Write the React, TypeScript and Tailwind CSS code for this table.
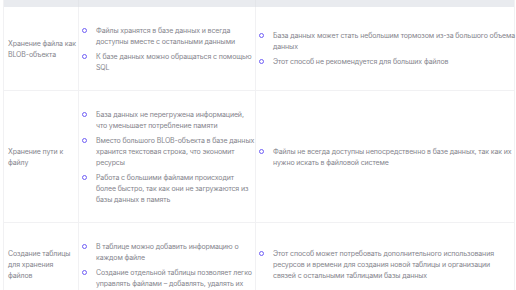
type Row = {
  name: string[];
  pros: string[][];
  cons: string[][];
  h: string;
};

const ROWS: Row[] = [
  {
    name: ['Хранение файла как', 'BLOB-объекта'],
    pros: [
      ['Файлы хранятся в базе данных и всегда', 'доступны вместе с остальными данными'],
      ['К базе данных можно обращаться с помощью', 'SQL'],
    ],
    cons: [
      ['База данных может стать небольшим тормозом из-за большого объема', 'данных'],
      ['Этот способ не рекомендуется для больших файлов'],
    ],
    h: 'h-[84px]',
  },
  {
    name: ['Хранение пути к', 'файлу'],
    pros: [
      ['База данных не перегружена информацией,', 'что уменьшает потребление памяти'],
      ['Вместо большого BLOB-объекта в базе данных', 'хранится текстовая строка, что экономит', 'ресурсы'],
      ['Работа с большими файлами происходит', 'более быстро, так как они не загружаются из', 'базы данных в память'],
    ],
    cons: [
      ['Файлы не всегда доступны непосредственно в базе данных, так как их', 'нужно искать в файловой системе'],
    ],
    h: 'h-[132px]',
  },
  {
    name: ['Создание таблицы', 'для хранения', 'файлов'],
    pros: [
      ['В таблице можно добавить информацию о', 'каждом файле'],
      ['Создание отдельной таблицы позволяет легко', 'управлять файлами – добавлять, удалять их'],
    ],
    cons: [
      ['Этот способ может потребовать дополнительного использования', 'ресурсов и времени для создания новой таблицы и организации', 'связей с остальными таблицами базы данных'],
    ],
    h: 'h-[84px]',
  },
];

function Lines({ lines }: { lines: string[] }) {
  return (
    <div>
      {lines.map((l) => (
        <div key={l} className="whitespace-nowrap">{l}</div>
      ))}
    </div>
  );
}

function Bullets({ items }: { items: string[][] }) {
  return (
    <ul className="flex flex-col gap-[4px]">
      {items.map((lines) => (
        <li key={lines[0]} className="flex items-start">
          <span className="mt-[3px] ml-[3px] mr-[9px] w-[5px] h-[5px] shrink-0 rounded-full border-[1.3px] border-[#6f5ef5]" />
          <Lines lines={lines} />
        </li>
      ))}
    </ul>
  );
}

export default function App() {
  return (
    <div className="w-[516px] h-[290px] overflow-hidden bg-white font-['Inter',sans-serif] text-[7px] leading-[11px] tracking-[-0.12px] text-[#85858d]">
      <div className="-mt-[16px] ml-[3px] w-[512px] border-x border-[#f1f1f3]">
        <div className="grid grid-cols-[75px_177px_258px] h-[23px] bg-[#e9ebef] font-medium text-[#55555c]">
          <div className="flex items-center pl-[4px] border-r border-[#e3e5e9]">Способ хранения</div>
          <div className="flex items-center pl-[4px] border-r border-[#e3e5e9]">Плюсы</div>
          <div className="flex items-center pl-[3px]">Минусы</div>
        </div>
        {ROWS.map((r) => (
          <div key={r.name[0]} className={`grid grid-cols-[75px_177px_258px] border-b border-[#f1f1f3] ${r.h}`}>
            <div className="flex items-center pl-[4px] border-r border-[#f1f1f3]">
              <Lines lines={r.name} />
            </div>
            <div className="flex items-center border-r border-[#f1f1f3]">
              <Bullets items={r.pros} />
            </div>
            <div className="flex items-center">
              <Bullets items={r.cons} />
            </div>
          </div>
        ))}
      </div>
    </div>
  );
}
